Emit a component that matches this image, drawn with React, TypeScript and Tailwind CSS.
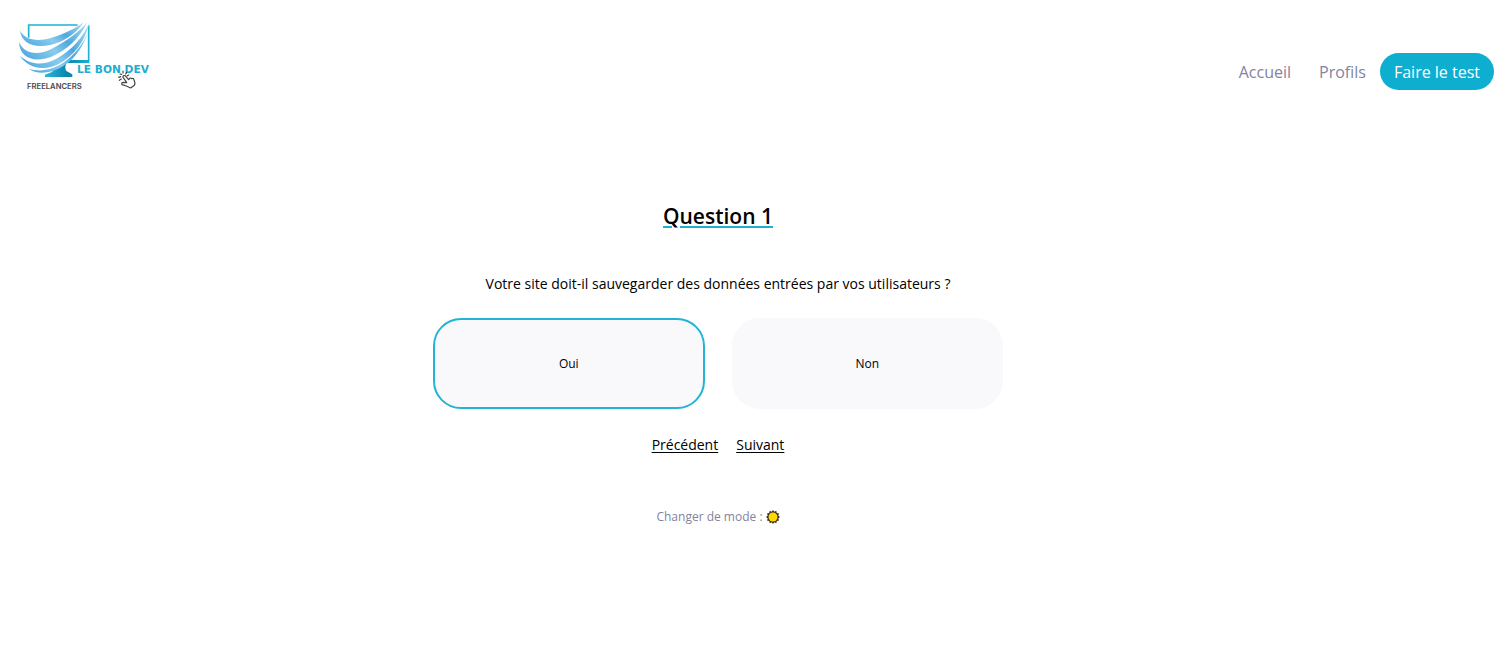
import { useState } from "react";

function Logo() {
  return (
    <svg viewBox="0 0 450 240" className="h-20 w-[150px]" role="img" aria-label="Le Bon Dev Freelancers">
      <defs>
        <linearGradient id="swoosh" x1="0" y1="0.7" x2="1" y2="0.1">
          <stop offset="0" stopColor="#58aee0" />
          <stop offset="0.35" stopColor="#8acbee" />
          <stop offset="0.6" stopColor="#4fa8dc" />
          <stop offset="1" stopColor="#a4dcf4" />
        </linearGradient>
        <linearGradient id="stand" x1="0" y1="0" x2="1" y2="0">
          <stop offset="0" stopColor="#25b8dc" />
          <stop offset="0.5" stopColor="#0a84ac" />
          <stop offset="1" stopColor="#17b2d8" />
        </linearGradient>
      </defs>
      <path d="M56 68V30H203M236 30V138" fill="none" stroke="#20b1d3" strokeWidth="5" />
      <path d="M160 135H238V144H170Q162 158 169 168L187 178V186H105V179L124 172Q136 165 134 150Z" fill="url(#stand)" />
      <path d="M28 56C50 90 110 90 150 70C190 50 220 36 238 22C224 82 186 134 144 158C104 178 72 174 46 158Z" fill="#fff" />
      <g fill="url(#swoosh)">
        <path d="M30 46C44 76 82 80 120 70C160 59 200 38 222 22C196 58 160 82 120 90C72 100 34 86 30 46Z" />
        <path d="M27 80C42 118 84 122 124 102C170 79 210 48 232 22C206 74 170 106 124 125C74 144 28 130 27 80Z" />
        <path d="M30 123C64 151 98 152 138 132C186 106 222 64 238 22C224 84 190 124 146 147C100 170 52 158 30 123Z" />
        <path d="M56 162C94 172 130 164 162 142C194 119 220 86 235 48C218 104 186 140 150 159C118 176 80 178 56 162Z" />
      </g>
      <text x="201" y="175" fontSize="32" fontWeight="700" fill="#20aed0" fontFamily="DejaVu Sans, sans-serif">LE BON DEV</text>
      <text x="51" y="221" fontSize="23" fontWeight="600" fill="#4a4a4c" fontFamily="Inter, sans-serif">FREELANCERS</text>
      <g fill="none" stroke="#444" strokeWidth="3.5" strokeLinecap="round" strokeLinejoin="round">
        <path d="M350 202L339 187Q338 180 345 182L356 194Q360 186 365 191Q371 188 372 195Q377 205 373 211L362 219L349 213L336 209Q333 203 340 202L350 203" fill="#fff" />
        <path d="M326 187L332 185M330 177L335 178M339 168V174M350 172L347 177M328 196L334 192M356 180L351 183" />
      </g>
    </svg>
  );
}

function SunIcon() {
  return (
    <svg viewBox="0 0 28 28" className="size-[14px]" aria-hidden="true">
      <path
        d="M14 0L16.6 3.4L20.5 1.5L21.6 5.8L26 6.8L24.5 11L28 14L24.5 17L26 21.2L21.6 22.2L20.5 26.5L16.6 24.6L14 28L11.4 24.6L7.5 26.5L6.4 22.2L2 21.2L3.5 17L0 14L3.5 11L2 6.8L6.4 5.8L7.5 1.5L11.4 3.4Z"
        fill="#3a3216"
      />
      <circle cx="14" cy="14" r="9" fill="#ffd905" />
    </svg>
  );
}

const choices = ["Oui", "Non"];

export default function App() {
  const [answer, setAnswer] = useState("Oui");

  return (
    <div className="min-h-screen bg-white font-['Trebuchet_MS','Open_Sans',sans-serif] text-black">
      <header className="flex items-start justify-between pt-[15px] pr-[18px] pl-[10px]">
        <a href="#accueil">
          <Logo />
        </a>
        <nav className="mt-[38px] flex items-center text-base leading-5 text-[#8284a0]">
          <a href="#accueil" className="px-3.5 pt-[9px] pb-2">Accueil</a>
          <a href="#profils" className="px-3.5 pt-[9px] pb-2">Profils</a>
          <a href="#test" className="rounded-full bg-[#0eaed1] px-3.5 pt-[9px] pb-2 text-white">Faire le test</a>
        </nav>
      </header>

      <main className="flex flex-col items-center pt-[107px] pr-[76px]">
        <h1 className="text-[21px] leading-7 font-semibold underline decoration-[#1cb0d3] decoration-2 underline-offset-2">
          Question 1
        </h1>
        <p className="mt-11 text-sm leading-5">
          Votre site doit-il sauvegarder des données entrées par vos utilisateurs ?
        </p>
        <div className="mt-6 flex w-full max-w-[570px] gap-[27px]">
          {choices.map((choice) => (
            <button
              key={choice}
              type="button"
              aria-pressed={answer === choice}
              onClick={() => setAnswer(choice)}
              className={
                answer === choice
                  ? "h-[91px] flex-1 rounded-[28px] border-2 border-[#24b3d5] bg-[#f9f9fc] text-xs"
                  : "h-[91px] flex-1 rounded-[28px] border-2 border-[#f9f9fc] bg-[#f9f9fc] text-xs"
              }
            >
              {choice}
            </button>
          ))}
        </div>
        <div className="mt-[26px] flex gap-[18px] text-sm leading-5">
          <button type="button" className="underline underline-offset-2">Précédent</button>
          <button type="button" className="underline underline-offset-2">Suivant</button>
        </div>
        <button type="button" className="mt-[52px] flex items-center gap-[3px] text-xs leading-5 text-[#8284a0]">
          Changer de mode :
          <SunIcon />
        </button>
      </main>
    </div>
  );
}
